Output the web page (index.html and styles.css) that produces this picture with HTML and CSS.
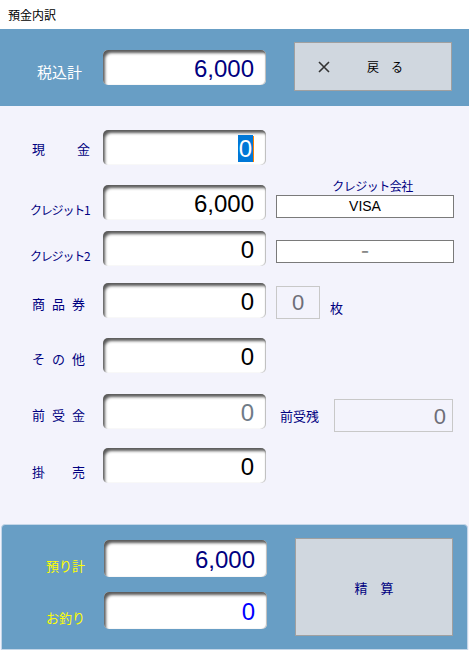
FILE: index.html
```html
<!DOCTYPE html>
<html lang="ja">
  <head>
    <meta charset="UTF-8" />
    <title>預金内訳</title>
    <link rel="stylesheet" href="styles.css">
  </head>
  <body>
    <div class="titlebar">預金内訳</div>

    <header class="band">
      <div class="lbl-top">税込計</div>
      <div class="box navy">6,000</div>
      <button class="btn back">
        <svg class="x" width="12" height="12" viewBox="0 0 12 12"><path d="M1 1L11 11M11 1L1 11" stroke="#333" stroke-width="1.6" fill="none"/></svg>
        <span>戻　る</span>
      </button>
    </header>

    <main class="form">
      <div class="lbl wide">現金</div>
      <div class="box"><span class="sel">0</span><span class="caret"></span></div>
      <div></div>

      <div class="lbl kana">クレジット1</div>
      <div class="box">6,000</div>
      <div class="card">
        <div class="card-lbl">クレジット会社</div>
        <div class="field">VISA</div>
      </div>

      <div class="lbl kana">クレジット2</div>
      <div class="box">0</div>
      <div class="card mid">
        <div class="field">－</div>
      </div>

      <div class="lbl">商品券</div>
      <div class="box">0</div>
      <div class="count">
        <div class="dim small">0</div>
        <span class="unit">枚</span>
      </div>

      <div class="lbl">その他</div>
      <div class="box">0</div>
      <div></div>

      <div class="lbl">前受金</div>
      <div class="box grey">0</div>
      <div class="rest">
        <span class="rest-lbl">前受残</span>
        <div class="dim big">0</div>
      </div>

      <div class="lbl wide2">掛売</div>
      <div class="box">0</div>
      <div></div>
    </main>

    <footer class="panel">
      <div class="lbl-yel">預り計</div>
      <div class="box navy tall">6,000</div>
      <button class="btn pay">精　算</button>
      <div class="lbl-yel r2">お釣り</div>
      <div class="box blue tall r2">0</div>
    </footer>
  </body>
</html>
```

FILE: styles.css
```css
body {
  margin: 0;
  width: 469px;
  height: 650px;
  overflow: hidden;
  background: #f3f3fc;
  font-family: "Noto Sans CJK JP", sans-serif;
}
.titlebar {
  height: 29px;
  background: white;
  font-size: 12px;
  line-height: 29px;
  padding-left: 8px;
  color: #000;
}

/* input look */
.box {
  height: 35px;
  box-sizing: border-box;
  background: white;
  border-radius: 5px;
  box-shadow: inset 3px 4px 3px -1px #5a5a5a, inset -1px 0 1px #bbb;
  font-family: "Liberation Sans", Arial, sans-serif;
  font-size: 24px;
  line-height: 37px;
  text-align: right;
  padding-right: 12px;
  color: #000;
}
.navy { color: #000080; }
.blue { color: #0000ff; }
.grey { color: #707b88; }
.tall { height: 37px; line-height: 39px; }

.sel {
  background: #0078d7;
  color: white;
  padding: 0 1px;
}
.caret {
  display: inline-block;
  width: 1px;
  height: 26px;
  background: #ff8000;
  vertical-align: -5px;
}

.btn {
  background: #d0d7df;
  border: 1px solid #a0a0a0;
  font-family: "Noto Sans CJK JP", sans-serif;
  color: #000;
  padding: 0;
}

.band {
  height: 77px;
  background: #689ec5;
  display: grid;
  grid-template-columns: 103px 163px 28px 158px;
  align-items: start;
}
.lbl-top {
  color: white;
  font-size: 15px;
  padding: 33px 0 0 37px;
  line-height: 20px;
}
.band .box { margin-top: 21px; }
.back {
  grid-column: 4;
  margin-top: 13px;
  height: 49px;
  display: flex;
  align-items: center;
  font-size: 12px;
}
.back .x {
  margin: 0 37px 0 23px;
}

.form {
  height: 418px;
  box-sizing: border-box;
  padding-top: 24px;
  display: grid;
  grid-template-columns: 103px 163px 1fr;
  grid-template-rows: 55px 46px 52px 55px 56px 54px 35px;
  align-items: start;
}
.lbl {
  height: 35px;
  display: flex;
  align-items: flex-end;
  padding: 0 0 5px 32px;
  box-sizing: border-box;
  color: #000080;
  font-size: 13px;
  letter-spacing: 7px;
  line-height: 18px;
  white-space: nowrap;
}
.lbl.wide { letter-spacing: 32px; padding-bottom: 7px; }
.lbl.wide2 { letter-spacing: 27px; padding-bottom: 2px; }
.lbl.kana {
  font-size: 12px;
  letter-spacing: -1.2px;
  padding: 0 0 1px 30px;
}

.card {
  height: 35px;
  padding-left: 10px;
  display: flex;
  flex-direction: column;
  justify-content: flex-end;
  padding-bottom: 2px;
  box-sizing: border-box;
}
.card.mid { justify-content: center; padding-top: 8px; }
.card-lbl {
  color: #000080;
  font-size: 12px;
  text-align: center;
  margin: -10px 0 2px;
  letter-spacing: -0.5px;
  line-height: 14px;
}
.field {
  width: 178px;
  height: 23px;
  box-sizing: border-box;
  border: 1px solid #7a7a7a;
  background: white;
  font-family: "Liberation Sans", Arial, sans-serif;
  font-size: 14px;
  line-height: 21px;
  text-align: center;
  color: #000;
}

.dim {
  box-sizing: border-box;
  border: 1px solid #c8c8c8;
  background: #f3f3fc;
  color: #6e6e78;
  font-family: "Liberation Sans", Arial, sans-serif;
  font-size: 22px;
}
.count {
  padding: 3px 0 0 10px;
  display: flex;
  align-items: flex-end;
}
.dim.small {
  width: 44px;
  height: 33px;
  line-height: 31px;
  text-align: center;
}
.unit {
  color: #000080;
  font-size: 13px;
  margin: 0 0 2px 10px;
}
.rest {
  padding: 5px 0 0 14px;
  display: flex;
  align-items: center;
}
.rest-lbl {
  color: #000080;
  font-size: 13px;
  width: 54px;
}
.dim.big {
  width: 119px;
  height: 33px;
  line-height: 33px;
  text-align: right;
  padding-right: 6px;
}

.panel {
  height: 126px;
  margin: 0 1px;
  box-sizing: border-box;
  background: #689ec5;
  border: 1px solid #c4d6e8;
  border-radius: 4px 4px 0 0;
  display: grid;
  grid-template-columns: 102px 163px 28px 158px;
  grid-template-rows: 52px 46px;
  padding-top: 15px;
}
.lbl-yel {
  grid-column: 1;
  color: #ffff00;
  font-size: 13px;
  padding: 17px 0 0 44px;
  line-height: 18px;
}
.panel .box { grid-column: 2; }
.panel .r2 { grid-row: 2; }
.pay {
  grid-column: 4;
  grid-row: 1 / 3;
  height: 98px;
  margin-top: -2px;
  color: #000080;
  font-size: 13px;
}
```
